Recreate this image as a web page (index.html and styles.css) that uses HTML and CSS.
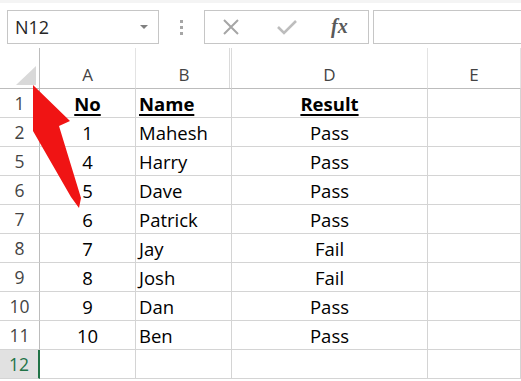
FILE: index.html
```
<!DOCTYPE html>
<html lang="en">
<head>
    <meta charset="UTF-8">
    <title>Sheet</title>
    <link rel="stylesheet" href="styles.css">
</head>
<body>
    <div class="toolbar">
        <div class="namebox">
            <span>N12</span>
            <span class="caret"></span>
        </div>
        <div class="dots"><i></i><i></i><i></i></div>
        <div class="buttons">
            <svg class="icon" width="18" height="18" viewBox="0 0 18 18">
                <path d="M2 2 L16 16 M16 2 L2 16" stroke="#a6a6a6" stroke-width="2" fill="none"/>
            </svg>
            <svg class="icon" width="20" height="16" viewBox="0 0 20 16">
                <path d="M1 8 L7 14 L19 2" stroke="#bdbdbd" stroke-width="2.6" fill="none"/>
            </svg>
            <span class="fx">fx</span>
        </div>
        <div class="formula"></div>
    </div>

    <div class="sheet">
        <div class="hd corner">
            <svg width="20" height="19" viewBox="0 0 20 19"><polygon points="20,0 20,19 0,19" fill="#d9d9d9"/></svg>
        </div>
        <div class="hd col">A</div>
        <div class="hd col col-b">B</div>
        <div class="hd col col-d">D</div>
        <div class="hd col">E</div>

        <div class="rn">1</div>
        <div class="c center head">No</div>
        <div class="c head">Name</div>
        <div class="c center head">Result</div>
        <div class="c"></div>

        <div class="rn">2</div>
        <div class="c center">1</div>
        <div class="c">Mahesh</div>
        <div class="c center">Pass</div>
        <div class="c"></div>

        <div class="rn">5</div>
        <div class="c center">4</div>
        <div class="c">Harry</div>
        <div class="c center">Pass</div>
        <div class="c"></div>

        <div class="rn">6</div>
        <div class="c center">5</div>
        <div class="c">Dave</div>
        <div class="c center">Pass</div>
        <div class="c"></div>

        <div class="rn">7</div>
        <div class="c center">6</div>
        <div class="c">Patrick</div>
        <div class="c center">Pass</div>
        <div class="c"></div>

        <div class="rn">8</div>
        <div class="c center">7</div>
        <div class="c">Jay</div>
        <div class="c center">Fail</div>
        <div class="c"></div>

        <div class="rn">9</div>
        <div class="c center">8</div>
        <div class="c">Josh</div>
        <div class="c center">Fail</div>
        <div class="c"></div>

        <div class="rn">10</div>
        <div class="c center">9</div>
        <div class="c">Dan</div>
        <div class="c center">Pass</div>
        <div class="c"></div>

        <div class="rn">11</div>
        <div class="c center">10</div>
        <div class="c">Ben</div>
        <div class="c center">Pass</div>
        <div class="c"></div>

        <div class="rn selected">12</div>
        <div class="c"></div>
        <div class="c"></div>
        <div class="c"></div>
        <div class="c"></div>
    </div>

    <!-- annotation arrow pointing at the select-all corner -->
    <svg class="arrow" width="521" height="381" viewBox="0 0 521 381">
        <polygon points="33,85 70,121 59,126 81,198 79,208 71,197 33,131" fill="#f01414"/>
    </svg>
</body>
</html>
```

FILE: styles.css
```
body {
    margin: 0;
    width: 521px;
    height: 381px;
    overflow: hidden;
    background: #fff;
    font-family: "Open Sans", Lato, sans-serif;
    position: relative;
}
.toolbar {
    display: flex;
    align-items: center;
    height: 48px;
    padding: 7px 0 4px 7px;
    box-sizing: border-box;
    border-top: 3px solid #f4f4f4;
}
.namebox {
    width: 152px;
    height: 34px;
    border: 1px solid #c6c6c6;
    box-sizing: border-box;
    display: flex;
    align-items: center;
    justify-content: space-between;
    padding: 0 10px 0 7px;
    font-size: 18px;
    color: #262626;
}
.caret {
    width: 0;
    height: 0;
    border-left: 4px solid transparent;
    border-right: 4px solid transparent;
    border-top: 4px solid #808080;
}
.dots {
    width: 45px;
    display: flex;
    flex-direction: column;
    align-items: center;
    gap: 3px;
}
.dots i {
    width: 3px;
    height: 3px;
    background: #a6a6a6;
}
.buttons {
    width: 165px;
    height: 34px;
    border: 1px solid #c6c6c6;
    box-sizing: border-box;
    display: flex;
    align-items: center;
    padding-left: 17px;
}
.buttons .icon:first-child {
    margin-right: 37px;
}
.buttons .icon:nth-child(2) {
    margin-right: 34px;
}
.fx {
    font-family: "Liberation Serif", serif;
    font-style: italic;
    font-weight: bold;
    font-size: 20px;
    color: #595959;
    margin-top: -2px;
}
.formula {
    flex: 1;
    height: 34px;
    margin-left: 4px;
    margin-right: -10px;
    border: 1px solid #c6c6c6;
    box-sizing: border-box;
}
.sheet {
    display: grid;
    grid-template-columns: 40px 96px 96px 196px 1fr;
    grid-template-rows: 41px;
    grid-auto-rows: 29px;
}
.sheet > div {
    border-right: 1px solid #d4d4d4;
    border-bottom: 1px solid #d4d4d4;
    box-sizing: border-box;
}
.hd {
    border-bottom-color: #bcbcbc !important;
    border-right-color: #e3e3e3 !important;
}
.col {
    display: flex;
    align-items: flex-end;
    justify-content: center;
    padding-bottom: 2px;
    font-size: 17px;
    color: #444;
}
.col-b {
    border-right: none !important;
    background: linear-gradient(to right, transparent 93px, #dadada 93px, #dadada 94px, transparent 94px);
}
.col-d {
    border-left: 1px solid #dadada;
    margin-left: -1px;
}
.corner {
    display: flex;
    align-items: flex-end;
    justify-content: flex-end;
    padding: 0 3px 3px 0;
    border-right-color: #bcbcbc !important;
}
.rn {
    display: flex;
    align-items: center;
    justify-content: center;
    font-size: 17.5px;
    color: #444;
    border-right-color: #bcbcbc !important;
}
.rn.selected {
    background: #e1e1e1;
    color: #217346;
    border-right: 2px solid #217346 !important;
}
.c {
    display: flex;
    align-items: center;
    padding-left: 3px;
    font-size: 18.5px;
    color: #000;
}
.c.center {
    justify-content: center;
    padding-left: 0;
}
.head {
    font-weight: bold;
    text-decoration: underline;
    text-decoration-thickness: 2px;
    text-underline-offset: 3px;
}
.arrow {
    position: absolute;
    left: 0;
    top: 0;
    pointer-events: none;
}
```
